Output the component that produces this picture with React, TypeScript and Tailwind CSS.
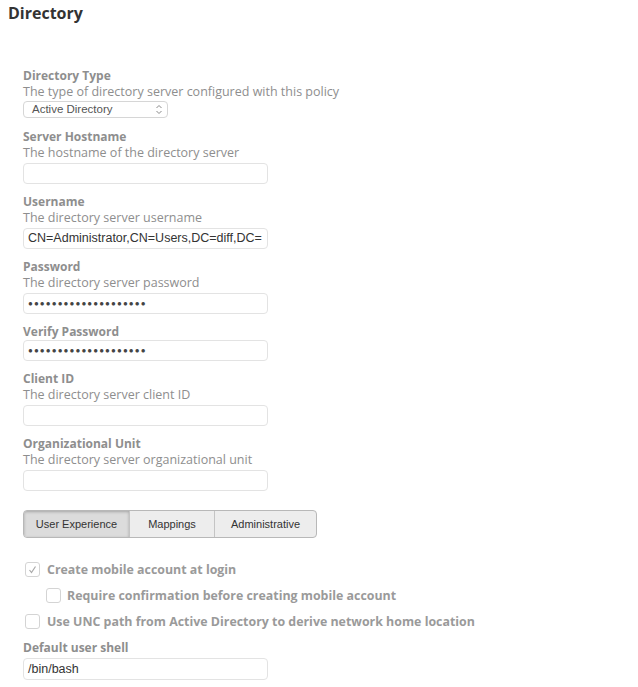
import React from 'react';

const font = "font-['Open_Sans','DejaVu_Sans',sans-serif]";

const Label = ({ children }: { children: React.ReactNode }) => (
  <div className="text-[12px] leading-[16px] font-bold text-[#8e8e8e]">{children}</div>
);

const Desc = ({ children }: { children: React.ReactNode }) => (
  <div className="text-[12.5px] leading-[16px] text-[#8e8e8e]">{children}</div>
);

const TextBox = ({ children, className = '' }: { children?: React.ReactNode; className?: string }) => (
  <div
    className={`w-[245px] h-[21px] border border-[#e3e3e3] rounded-[4px] bg-white px-[4px] flex items-center overflow-hidden whitespace-nowrap font-['Liberation_Sans',sans-serif] text-[12.5px] text-[#333] ${className}`}
  >
    {children}
  </div>
);

const Dots = () => (
  <span className="text-[8px] tracking-[1.1px] text-[#444] leading-none">{'●'.repeat(20)}</span>
);

const Checkbox = ({ checked }: { checked?: boolean }) => (
  <span className="w-[15px] h-[15px] border border-[#d4d4d4] rounded-[3px] bg-white flex items-center justify-center shrink-0">
    {checked && (
      <svg width="11" height="11" viewBox="0 0 11 11">
        <path d="M2.5 6 L4.5 8.5 L8.5 2.5" fill="none" stroke="#a8a8a8" strokeWidth="1.2" />
      </svg>
    )}
  </span>
);

const App = () => {
  return (
    <div className={`w-[638px] h-[687px] bg-white ${font} relative overflow-hidden`}>
      <h1 className="text-[16px] leading-[20px] font-bold text-[#333] pl-[8px] pt-[3px]">Directory</h1>

      <div className="pl-[23px] pt-[45px] flex flex-col">
        <Label>Directory Type</Label>
        <Desc>The type of directory server configured with this policy</Desc>
        <div className="mt-[1px] w-[145px] h-[17px] border border-[#d6d6d6] rounded-[4px] flex items-center justify-between pl-[8px] pr-[4px] font-['Liberation_Sans',sans-serif] text-[11.5px] text-[#555]">
          <span>Active Directory</span>
          <svg width="8" height="11" viewBox="0 0 8 11">
            <path d="M1.5 4 L4 1.5 L6.5 4 M1.5 7 L4 9.5 L6.5 7" fill="none" stroke="#8a8a8a" strokeWidth="1" />
          </svg>
        </div>

        <div className="mt-[11px]">
          <Label>Server Hostname</Label>
          <Desc>The hostname of the directory server</Desc>
          <TextBox className="mt-[2px]" />
        </div>

        <div className="mt-[10px]">
          <Label>Username</Label>
          <Desc>The directory server username</Desc>
          <TextBox className="mt-[2px]">CN=Administrator,CN=Users,DC=diff,DC=</TextBox>
        </div>

        <div className="mt-[10px]">
          <Label>Password</Label>
          <Desc>The directory server password</Desc>
          <TextBox className="mt-[2px]">
            <Dots />
          </TextBox>
        </div>

        <div className="mt-[10px]">
          <Label>Verify Password</Label>
          <TextBox>
            <Dots />
          </TextBox>
        </div>

        <div className="mt-[10px]">
          <Label>Client ID</Label>
          <Desc>The directory server client ID</Desc>
          <TextBox className="mt-[2px]" />
        </div>

        <div className="mt-[10px]">
          <Label>Organizational Unit</Label>
          <Desc>The directory server organizational unit</Desc>
          <TextBox className="mt-[2px]" />
        </div>

        <div className="mt-[19px] flex w-[294px] h-[28px] border border-[#b8b8b8] rounded-[4px] overflow-hidden bg-[#ededed] font-['Liberation_Sans',sans-serif] text-[11px] text-[#333]">
          <div className="w-[106px] flex items-center justify-center bg-[#dcdcdc] shadow-[inset_0_1px_3px_rgba(0,0,0,0.25)] border-r border-[#c4c4c4]">
            User Experience
          </div>
          <div className="w-[85px] flex items-center justify-center border-r border-[#c4c4c4]">Mappings</div>
          <div className="flex-1 flex items-center justify-center">Administrative</div>
        </div>

        <div className="mt-[24px] flex flex-col gap-[11px] text-[12.4px] leading-[15px] font-bold text-[#9a9a9a]">
          <div className="flex items-center gap-[7px] pl-[2px]">
            <Checkbox checked />
            <span>Create mobile account at login</span>
          </div>
          <div className="flex items-center gap-[6px] pl-[23px]">
            <Checkbox />
            <span>Require confirmation before creating mobile account</span>
          </div>
          <div className="flex items-center gap-[7px] pl-[2px]">
            <Checkbox />
            <span>Use UNC path from Active Directory to derive network home location</span>
          </div>
        </div>

        <div className="mt-[11px]">
          <Label>Default user shell</Label>
          <TextBox className="mt-[2px] h-[22px]">/bin/bash</TextBox>
        </div>
      </div>
    </div>
  );
};

export default App;
